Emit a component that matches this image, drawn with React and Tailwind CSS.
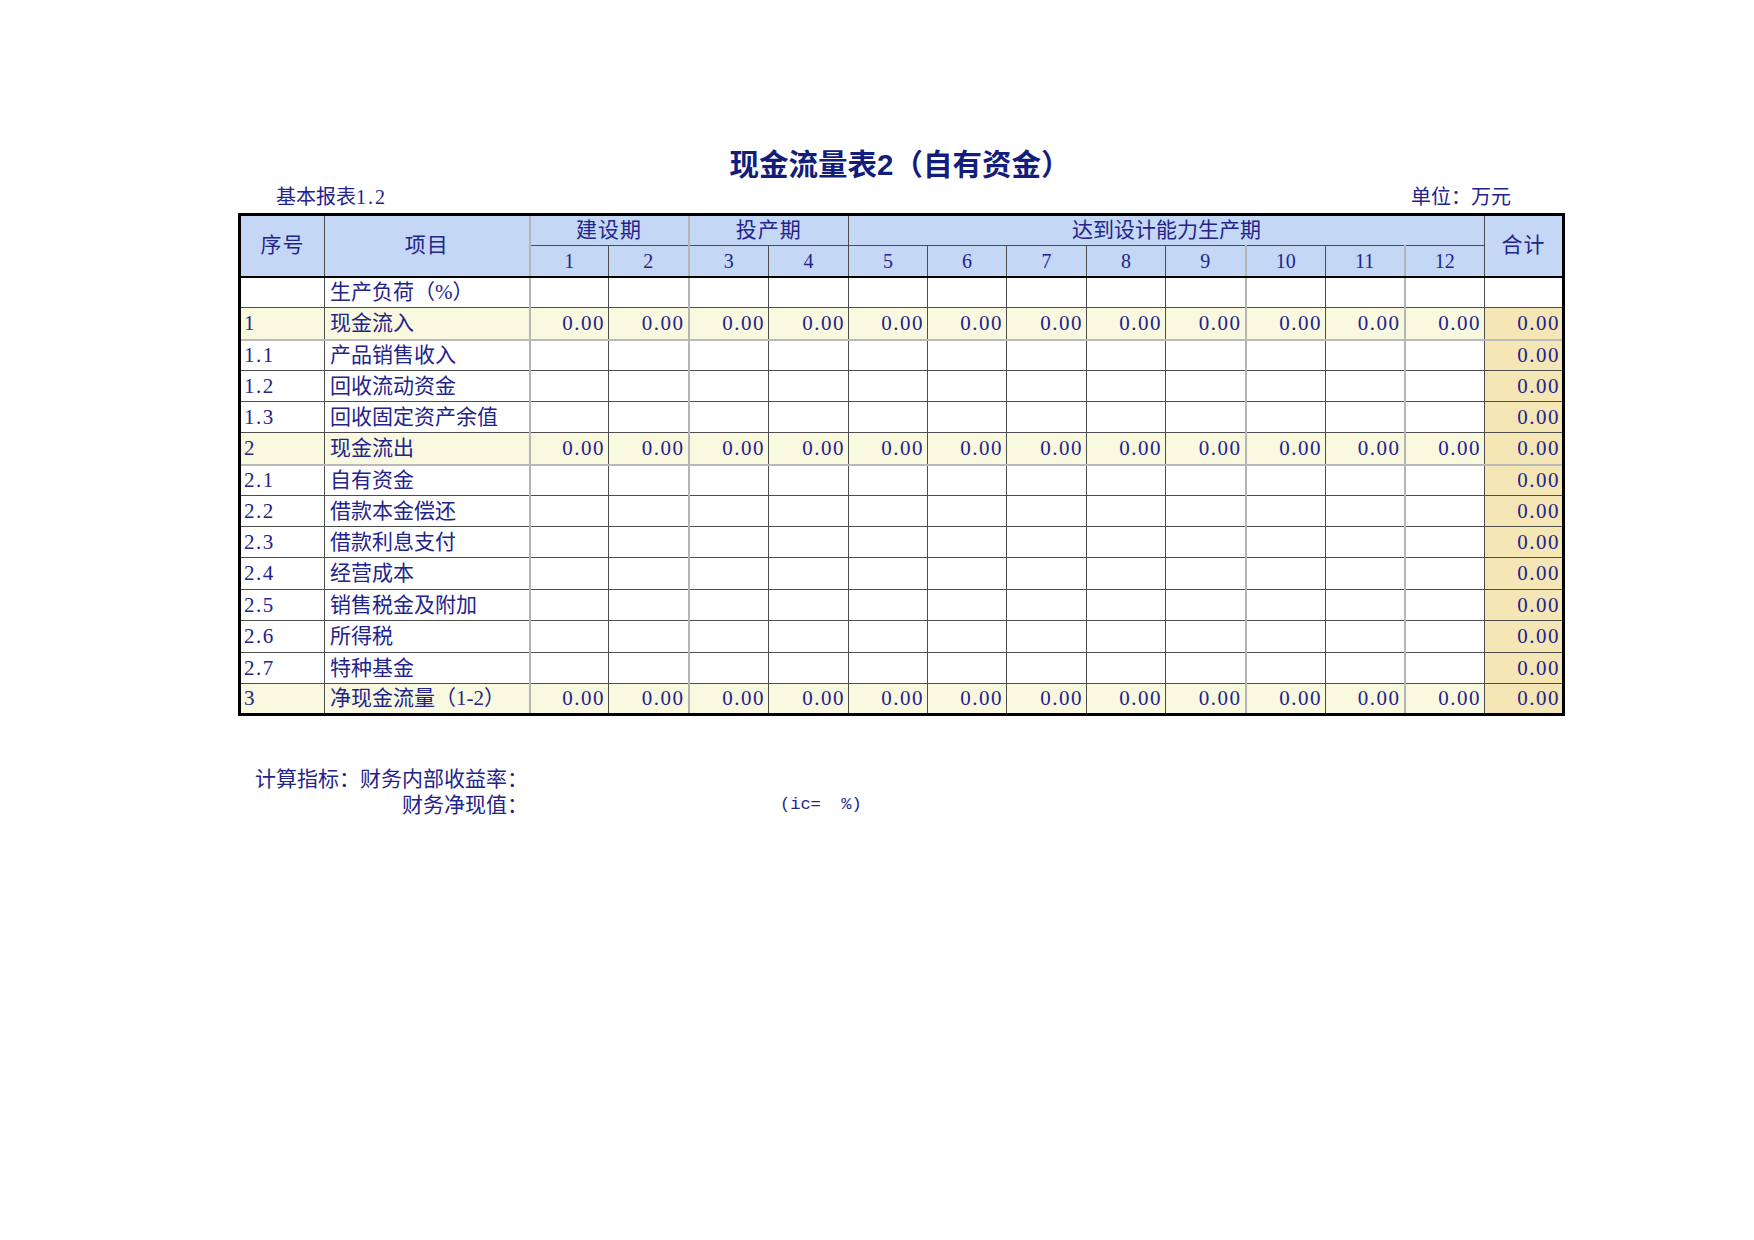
import React from "react";

const colW = [
  "w-[85px]", "w-[205px]",
  "w-[79px]", "w-[80px]", "w-[80px]", "w-[80px]", "w-[79px]", "w-[79px]",
  "w-[80px]", "w-[79px]", "w-[80px]", "w-[80px]", "w-[79px]", "w-[80px]",
  "w-[79px]",
];

// columns (1-based number col index) whose left edge is a pale thick line
const greyLeft = { 1: true, 3: true, 10: true, 12: true };

const rows = [
  { no: "", name: "生产负荷（%）", type: "blank", h: "h-[31px]" },
  { no: "1", name: "现金流入", type: "sum", h: "h-[32px]", greyBottom: true },
  { no: "1.1", name: "产品销售收入", h: "h-[31px]" },
  { no: "1.2", name: "回收流动资金", h: "h-[31px]" },
  { no: "1.3", name: "回收固定资产余值", h: "h-[31px]" },
  { no: "2", name: "现金流出", type: "sum", h: "h-[32px]", greyBottom: true },
  { no: "2.1", name: "自有资金", h: "h-[31px]" },
  { no: "2.2", name: "借款本金偿还", h: "h-[31px]" },
  { no: "2.3", name: "借款利息支付", h: "h-[31px]" },
  { no: "2.4", name: "经营成本", h: "h-[32px]" },
  { no: "2.5", name: "销售税金及附加", h: "h-[31px]" },
  { no: "2.6", name: "所得税", h: "h-[32px]" },
  { no: "2.7", name: "特种基金", h: "h-[31px]" },
  { no: "3", name: "净现金流量（1-2）", type: "sum", h: "h-[31px]" },
];

const nums = [1, 2, 3, 4, 5, 6, 7, 8, 9, 10, 11, 12];

export default function App() {
  return (
    <div className="w-[1754px] min-h-[1240px] bg-white pt-[144px] text-[#23238c] font-['Liberation_Serif','Noto_Sans_CJK_SC',serif]">
      <div className="ml-[238px] w-[1324px]">
        <div className="text-center text-[29.5px] leading-[36px] font-bold text-[#121d7c] font-['Noto_Sans_CJK_SC',sans-serif]">
          现金流量表<span className="font-['Liberation_Sans','Noto_Sans_CJK_SC',sans-serif]">2</span>（自有资金）
        </div>
        <div className="mt-[2px] flex justify-between text-[20px] leading-[24px] pl-[38px] pr-[51px]">
          <span>基本报表<span className="tracking-[2px]">1.2</span></span>
          <span>单位：万元</span>
        </div>
        <table className="mt-[4px] w-[1324px] table-fixed border-collapse border-[3px] border-black text-[21px] leading-none">
          <colgroup>
            {colW.map((c, i) => (
              <col key={i} className={c} />
            ))}
          </colgroup>
          <thead>
            <tr className="h-[31px] bg-[#c4d8f6]">
              <th rowSpan={2} className="border border-[#4d4d4d] border-b-2 border-b-black font-normal text-center tracking-[1px]">序号</th>
              <th rowSpan={2} className="border border-[#4d4d4d] border-b-2 border-b-black font-normal text-center tracking-[1px]">项目</th>
              <th colSpan={2} className="border border-[#4d4d4d] border-l-2 border-l-[#b5b5b5] font-normal text-center tracking-[1px]">建设期</th>
              <th colSpan={2} className="border border-[#4d4d4d] border-l-2 border-l-[#b5b5b5] font-normal text-center tracking-[1px]">投产期</th>
              <th colSpan={8} className="border border-[#4d4d4d] font-normal text-center">达到设计能力生产期</th>
              <th rowSpan={2} className="border border-[#4d4d4d] border-b-2 border-b-black font-normal text-center tracking-[1px]">合计</th>
            </tr>
            <tr className="h-[31px] bg-[#c4d8f6]">
              {nums.map((n) => (
                <th
                  key={n}
                  className={
                    greyLeft[n]
                      ? "border border-[#4d4d4d] border-l-2 border-l-[#b5b5b5] border-b-2 border-b-black font-normal text-center text-[20px]"
                      : "border border-[#4d4d4d] border-b-2 border-b-black font-normal text-center text-[20px]"
                  }
                >
                  {n}
                </th>
              ))}
            </tr>
          </thead>
          <tbody>
            {rows.map((r, ri) => {
              const sum = r.type === "sum";
              const blank = r.type === "blank";
              const rowBg = sum ? "bg-[#f9f9df]" : "bg-white";
              const bb = r.greyBottom ? " border-b-2 border-b-[#b9b9b9]" : "";
              return (
                <tr key={ri} className={r.h + " " + rowBg}>
                  <td className={"border border-[#4d4d4d] text-left pl-[3px] tracking-[1.5px]" + bb}>{r.no}</td>
                  <td className={"border border-[#4d4d4d] text-left pl-[5px] whitespace-nowrap" + bb}>{r.name}</td>
                  {nums.map((n) => (
                    <td
                      key={n}
                      className={
                        (greyLeft[n]
                          ? "border border-[#4d4d4d] border-l-2 border-l-[#b5b5b5] text-right pr-[3px] tracking-[1.5px]"
                          : "border border-[#4d4d4d] text-right pr-[3px] tracking-[1.5px]") + bb
                      }
                    >
                      {sum ? "0.00" : ""}
                    </td>
                  ))}
                  <td
                    className={
                      (blank
                        ? "border border-[#4d4d4d] bg-white text-right pr-[2px] tracking-[1.5px]"
                        : "border border-[#4d4d4d] bg-[#f5e6b6] text-right pr-[2px] tracking-[1.5px]") + bb
                    }
                  >
                    {blank ? "" : "0.00"}
                  </td>
                </tr>
              );
            })}
          </tbody>
        </table>
        <div className="mt-[50px] ml-[15px] text-[21px] leading-[26px]">
          <div className="w-[275px] text-right whitespace-nowrap">计算指标：财务内部收益率：</div>
          <div className="flex items-center">
            <div className="w-[275px] text-right whitespace-nowrap">财务净现值：</div>
            <div className="ml-[252px] whitespace-pre text-[17px] font-['Liberation_Mono',monospace]">{"(ic=  %)"}</div>
          </div>
        </div>
      </div>
    </div>
  );
}
